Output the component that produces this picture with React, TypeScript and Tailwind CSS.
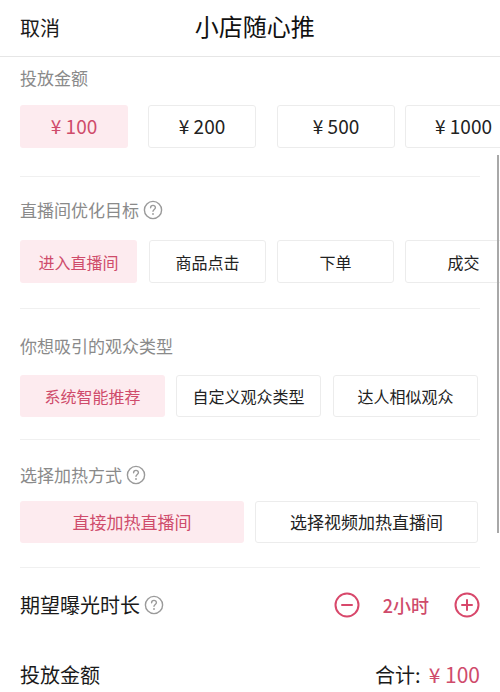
import { clsx as cn } from "clsx"

const font = { fontFamily: '"Noto Sans CJK SC", "Noto Sans", sans-serif' }

type Opt = { label: string; w: string; gap?: string; active?: boolean }

const amounts: Opt[] = [
  { label: "¥ 100", w: "w-[108px]", active: true },
  { label: "¥ 200", w: "w-[108px]", gap: "ml-[20px]" },
  { label: "¥ 500", w: "w-[118px]", gap: "ml-[21px]" },
  { label: "¥ 1000", w: "w-[117px]", gap: "ml-[10px]" },
]

const goals: Opt[] = [
  { label: "进入直播间", w: "w-[117px]", active: true },
  { label: "商品点击", w: "w-[117px]", gap: "ml-[12px]" },
  { label: "下单", w: "w-[117px]", gap: "ml-[11px]" },
  { label: "成交", w: "w-[117px]", gap: "ml-[11px]" },
]

const audiences: Opt[] = [
  { label: "系统智能推荐", w: "w-[145px]", active: true },
  { label: "自定义观众类型", w: "w-[145px]", gap: "ml-[11px]" },
  { label: "达人相似观众", w: "w-[145px]", gap: "ml-[12px]" },
]

const heats: Opt[] = [
  { label: "直接加热直播间", w: "w-[224px]", active: true },
  { label: "选择视频加热直播间", w: "w-[223px]", gap: "ml-[11px]" },
]

function Help({ size = 20 }: { size?: number }) {
  return (
    <svg width={size} height={size} viewBox="0 0 20 20" fill="none" className="shrink-0">
      <circle cx="10" cy="10" r="8.6" stroke="#9a9a9a" strokeWidth="1.4" />
      <path
        d="M7.6 7.8a2.4 2.4 0 0 1 4.8 0c0 1.5-2.4 1.8-2.4 3.5"
        stroke="#9a9a9a"
        strokeWidth="1.4"
        strokeLinecap="round"
      />
      <circle cx="10" cy="14" r="0.9" fill="#9a9a9a" />
    </svg>
  )
}

function Options({ items, h, size }: { items: Opt[]; h: string; size: string }) {
  return (
    <div className="flex overflow-hidden pl-5">
      {items.map((o) => (
        <div
          key={o.label}
          className={cn(
            "flex shrink-0 items-center justify-center rounded-[3px]",
            size,
            h,
            o.w,
            o.gap,
            o.active
              ? "bg-[#fdebef] text-[#cf4b6b]"
              : "border border-[#ececec] bg-white text-[#222]"
          )}
        >
          {o.label}
        </div>
      ))}
    </div>
  )
}

function Label({ text, help }: { text: string; help?: boolean }) {
  return (
    <div className="flex h-6 items-center gap-1 px-5 text-[17px] leading-6 text-[#8a8a8a]">
      {text}
      {help && <Help />}
    </div>
  )
}

function Divider({ mt }: { mt: string }) {
  return <div className={cn("mx-5 h-px bg-[#f0f0f0]", mt)} />
}

function Round({ plus }: { plus?: boolean }) {
  return (
    <svg width="26" height="26" viewBox="0 0 26 26" fill="none">
      <circle cx="13" cy="13" r="11.5" stroke="#d8486b" strokeWidth="2" />
      <path d="M8 13h10" stroke="#d8486b" strokeWidth="2" strokeLinecap="round" />
      {plus && <path d="M13 8v10" stroke="#d8486b" strokeWidth="2" strokeLinecap="round" />}
    </svg>
  )
}

export default function App() {
  return (
    <div className="relative h-[692px] w-[500px] overflow-hidden bg-white" style={font}>
      <header className="relative flex h-[57px] items-center border-b border-[#e6e6e6] px-5">
        <span className="text-[20px] text-[#1a1a1a]">取消</span>
        <span className="absolute left-1/2 top-1/2 -translate-x-[46%] -translate-y-[55%] text-[24px] text-[#111]">
          小店随心推
        </span>
      </header>

      <div className="pt-[9px]">
        <Label text="投放金额" />
        <div className="mt-[15px]">
          <Options items={amounts} h="h-[43px]" size="text-[19px]" />
        </div>
        <Divider mt="mt-[28px]" />

        <div className="mt-[21px]">
          <Label text="直播间优化目标" help />
        </div>
        <div className="mt-[18px]">
          <Options items={goals} h="h-[43px]" size="text-[16px]" />
        </div>
        <Divider mt="mt-[25px]" />

        <div className="mt-[25px]">
          <Label text="你想吸引的观众类型" />
        </div>
        <div className="mt-[17px]">
          <Options items={audiences} h="h-[42px]" size="text-[16px]" />
        </div>
        <Divider mt="mt-[22px]" />

        <div className="mt-[23px]">
          <Label text="选择加热方式" help />
        </div>
        <div className="mt-[14px]">
          <Options items={heats} h="h-[42px]" size="text-[17px]" />
        </div>
        <Divider mt="mt-[24px]" />

        <div className="mt-[23px] flex h-7 items-center justify-between px-5">
          <div className="flex items-center gap-1 text-[20px] text-[#1a1a1a]">
            期望曝光时长
            <Help />
          </div>
          <div className="flex items-center">
            <Round />
            <span className="ml-[23px] mr-[25px] text-[18px] font-medium text-[#cf4b6b]">2小时</span>
            <Round plus />
          </div>
        </div>

        <div className="mt-[42px] flex h-7 items-center justify-between px-5">
          <span className="text-[20px] text-[#1a1a1a]">投放金额</span>
          <span className="text-[20px] text-[#1a1a1a]">
            合计:<span className="ml-2 text-[21px] text-[#cf4b6b]">¥ 100</span>
          </span>
        </div>
      </div>

      <div className="absolute right-[1px] top-[155px] h-[378px] w-[2px] bg-[#a8a8a8]" />
    </div>
  )
}
